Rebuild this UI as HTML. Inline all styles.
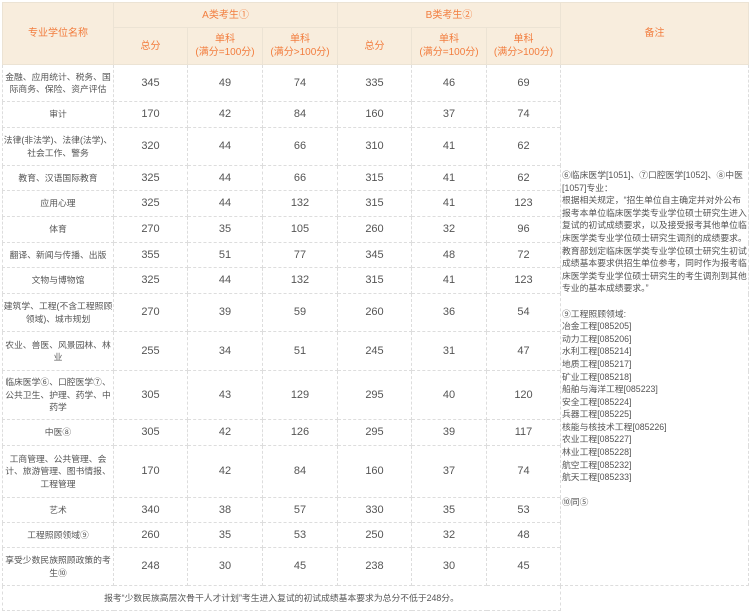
<!DOCTYPE html>
<html><head><meta charset="utf-8"><style>
html,body{margin:0;padding:0;background:#fff;width:750px;height:613px;overflow:hidden}
body{font-family:"Liberation Sans","Noto Sans CJK SC",sans-serif;font-size:11px;color:#555}
table{position:absolute;left:2px;top:2px;border-collapse:collapse;table-layout:fixed;width:746px}
td{border:1px dashed #ddd;text-align:center;vertical-align:middle;padding:0;line-height:13px;overflow:hidden;white-space:nowrap}
td.n{font-size:8.8px;line-height:12.5px;padding:0}
.h td{background:#f8eddd;color:#f27d3e;border:1px solid #ece3d4;font-size:10px;line-height:13px}
.rm{position:absolute;left:562px;top:169px;width:188px;font-size:8.8px;line-height:12.6px;color:#555;text-align:left;white-space:nowrap}
</style></head><body>
<table>
<colgroup><col style="width:111px"><col style="width:74px"><col style="width:75px"><col style="width:75px"><col style="width:74px"><col style="width:75px"><col style="width:74px"><col style="width:188px"></colgroup>
<tr class="h" style="height:25px"><td rowspan="2">专业学位名称</td><td colspan="3">A类考生①</td><td colspan="3">B类考生②</td><td rowspan="2">备注</td></tr>
<tr class="h" style="height:37px"><td>总分</td><td>单科<br>(满分=100分)</td><td>单科<br>(满分&gt;100分)</td><td>总分</td><td>单科<br>(满分=100分)</td><td>单科<br>(满分&gt;100分)</td></tr>
<tr style="height:37px"><td class="n">金融、应用统计、税务、国<br>际商务、保险、资产评估</td><td>345</td><td>49</td><td>74</td><td>335</td><td>46</td><td>69</td><td rowspan="16"></td></tr>
<tr style="height:26px"><td class="n">审计</td><td>170</td><td>42</td><td>84</td><td>160</td><td>37</td><td>74</td></tr>
<tr style="height:38px"><td class="n">法律(非法学)、法律(法学)、<br>社会工作、警务</td><td>320</td><td>44</td><td>66</td><td>310</td><td>41</td><td>62</td></tr>
<tr style="height:25px"><td class="n">教育、汉语国际教育</td><td>325</td><td>44</td><td>66</td><td>315</td><td>41</td><td>62</td></tr>
<tr style="height:26px"><td class="n">应用心理</td><td>325</td><td>44</td><td>132</td><td>315</td><td>41</td><td>123</td></tr>
<tr style="height:26px"><td class="n">体育</td><td>270</td><td>35</td><td>105</td><td>260</td><td>32</td><td>96</td></tr>
<tr style="height:25px"><td class="n">翻译、新闻与传播、出版</td><td>355</td><td>51</td><td>77</td><td>345</td><td>48</td><td>72</td></tr>
<tr style="height:26px"><td class="n">文物与博物馆</td><td>325</td><td>44</td><td>132</td><td>315</td><td>41</td><td>123</td></tr>
<tr style="height:38px"><td class="n">建筑学、工程(不含工程照顾<br>领域)、城市规划</td><td>270</td><td>39</td><td>59</td><td>260</td><td>36</td><td>54</td></tr>
<tr style="height:39px"><td class="n">农业、兽医、风景园林、林<br>业</td><td>255</td><td>34</td><td>51</td><td>245</td><td>31</td><td>47</td></tr>
<tr style="height:49px"><td class="n">临床医学⑥、口腔医学⑦、<br>公共卫生、护理、药学、中<br>药学</td><td>305</td><td>43</td><td>129</td><td>295</td><td>40</td><td>120</td></tr>
<tr style="height:26px"><td class="n">中医⑧</td><td>305</td><td>42</td><td>126</td><td>295</td><td>39</td><td>117</td></tr>
<tr style="height:52px"><td class="n">工商管理、公共管理、会<br>计、旅游管理、图书情报、<br>工程管理</td><td>170</td><td>42</td><td>84</td><td>160</td><td>37</td><td>74</td></tr>
<tr style="height:25px"><td class="n">艺术</td><td>340</td><td>38</td><td>57</td><td>330</td><td>35</td><td>53</td></tr>
<tr style="height:25px"><td class="n">工程照顾领域⑨</td><td>260</td><td>35</td><td>53</td><td>250</td><td>32</td><td>48</td></tr>
<tr style="height:38px"><td class="n">享受少数民族照顾政策的考<br>生⑩</td><td>248</td><td>30</td><td>45</td><td>238</td><td>30</td><td>45</td></tr>
<tr style="height:25px"><td colspan="7" class="n">报考“少数民族高层次骨干人才计划”考生进入复试的初试成绩基本要求为总分不低于248分。</td></tr>
</table>
<div class="rm">⑥临床医学[1051]、⑦口腔医学[1052]、⑧中医<br>[1057]专业：<br>根据相关规定，“招生单位自主确定并对外公布<br>报考本单位临床医学类专业学位硕士研究生进入<br>复试的初试成绩要求，以及接受报考其他单位临<br>床医学类专业学位硕士研究生调剂的成绩要求。<br>教育部划定临床医学类专业学位硕士研究生初试<br>成绩基本要求供招生单位参考，同时作为报考临<br>床医学类专业学位硕士研究生的考生调剂到其他<br>专业的基本成绩要求。”<br><br>⑨工程照顾领域:<br>冶金工程[085205]<br>动力工程[085206]<br>水利工程[085214]<br>地质工程[085217]<br>矿业工程[085218]<br>船舶与海洋工程[085223]<br>安全工程[085224]<br>兵器工程[085225]<br>核能与核技术工程[085226]<br>农业工程[085227]<br>林业工程[085228]<br>航空工程[085232]<br>航天工程[085233]<br><br>⑩同⑤</div>
</body></html>
